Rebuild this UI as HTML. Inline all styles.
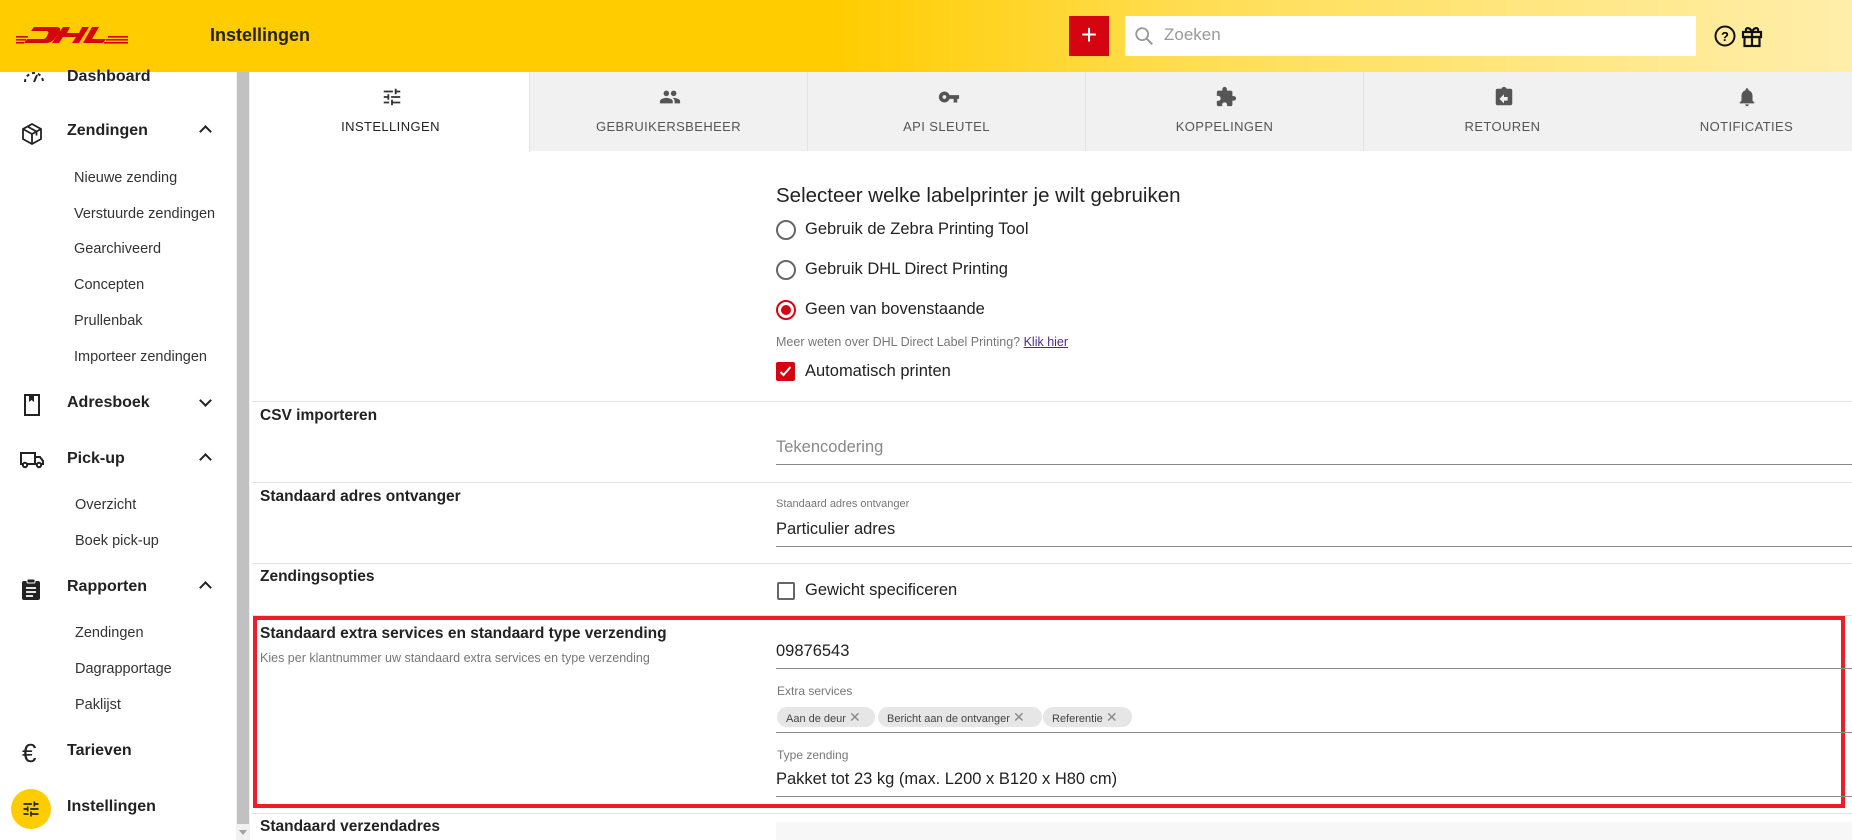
<!DOCTYPE html>
<html><head><meta charset="utf-8"><style>
*{box-sizing:border-box;margin:0;padding:0}
body{width:1852px;height:840px;overflow:hidden;font-family:"Liberation Sans",Arial,sans-serif;color:#222;background:#fff;position:relative}
.abs{position:absolute}
#hdr{left:0;top:0;width:1852px;height:72px;background:linear-gradient(90deg,#ffcc00 0%,#ffcc00 45%,#ffde55 65%,#ffeeaa 100%)}
.side{font-size:16px;font-weight:bold;color:#222}
.sub{font-size:14.5px;color:#333}
.tab{top:72px;height:79px;width:278px;background:#f1f1f1;border-right:1px solid #e3e3e3;text-align:center;font-size:13px;letter-spacing:.4px;color:#555}
.tab svg{position:absolute;left:129px;top:14px}
.tab span{position:absolute;left:0;right:0;top:47px}
.lbl{left:260px;font-size:15.5px;font-weight:bold;color:#222}
.hr{left:252px;width:1600px;height:1px;background:#e2e2e2}
.ul{left:776px;width:1076px;height:1px;background:#8a8a8a}
.t18{font-size:16.5px;color:#222}
.small{font-size:12.5px;color:#777}
.radio{width:20px;height:20px;border:2px solid #666;border-radius:50%}
.chip{top:707px;height:20px;border-radius:10px;background:#e6e6e6;font-size:11px;color:#444;line-height:20px;padding-left:9px}
</style></head><body>
<div id="hdr" class="abs"></div>
<!-- DHL logo -->
<svg class="abs" style="left:16px;top:26px" width="112" height="18" viewBox="0 0 112 18">
<g fill="#d40511">
<path d="M18 1h22c5 0 5 3 3 6l-3 4c-2 3-5 6-10 6H8l3-4h16c2 0 3-1 4-3l1-2c1-2 0-3-2-3H15z"/>
<path d="M47 1h7l-3 6h12l3-6h7l-10 16h-7l4-6H47l-4 6h-7z"/>
<path d="M76 1h7l-7 12h14l-3 4H67z"/>
<rect x="0" y="10" width="12" height="1.6"/><rect x="0" y="13" width="10" height="1.6"/><rect x="0" y="16" width="8" height="1.6"/>
<rect x="92" y="10" width="20" height="1.6"/><rect x="90" y="13" width="22" height="1.6"/><rect x="88" y="16" width="24" height="1.6"/>
</g></svg>
<div class="abs" style="left:210px;top:25px;font-size:18px;font-weight:bold;color:#222">Instellingen</div>
<div class="abs" style="left:1069px;top:16px;width:40px;height:40px;background:#d40511;color:#fff;font-size:28px;line-height:38px;text-align:center">+</div>
<div class="abs" style="left:1125px;top:16px;width:571px;height:40px;background:#fff"></div>
<svg class="abs" style="left:1133px;top:25px" width="22" height="22" viewBox="0 0 24 24"><circle cx="10" cy="10" r="6.5" fill="none" stroke="#999" stroke-width="2"/><path d="M15 15l6 6" stroke="#999" stroke-width="2.2"/></svg>
<div class="abs" style="left:1164px;top:25px;font-size:17px;color:#999">Zoeken</div>
<svg class="abs" style="left:1713px;top:24px" width="24" height="24" viewBox="0 0 24 24"><circle cx="12" cy="12" r="9.5" fill="none" stroke="#111" stroke-width="2"/><text x="12" y="17" font-size="13" font-weight="bold" text-anchor="middle" font-family="Liberation Sans">?</text></svg>
<svg class="abs" style="left:1741px;top:24px" width="22" height="24" viewBox="0 0 22 24"><g fill="none" stroke="#111" stroke-width="2.2"><rect x="2" y="8" width="18" height="5"/><rect x="3.5" y="13" width="15" height="9"/><path d="M11 8v14M11 8c-2-5-7-5-6-1M11 8c2-5 7-5 6-1"/></g></svg>

<!-- sidebar -->
<div class="abs" style="left:236px;top:72px;width:14px;height:768px;background:#f1f1f1"></div>
<div class="abs" style="left:237px;top:72px;width:12px;height:752px;background:#c1c1c1"></div>
<div class="abs" style="left:239px;top:830px;width:0;height:0;border-left:4px solid transparent;border-right:4px solid transparent;border-top:5px solid #a3a3a3"></div>
<svg class="abs" style="left:22px;top:72px" width="24" height="12" viewBox="0 0 24 12"><path d="M3 10a9 9 0 0 1 18 0" fill="none" stroke="#222" stroke-width="2" stroke-dasharray="3 3"/><path d="M12 10l3-7" stroke="#222" stroke-width="2"/></svg>
<div class="abs side" style="left:67px;top:68px">Dashboard</div>
<svg class="abs" style="left:20px;top:122px" width="24" height="24" viewBox="0 0 24 24"><g fill="none" stroke="#222" stroke-width="1.8"><path d="M12 2l9 5v10l-9 5-9-5V7z"/><path d="M3 7l9 5 9-5M12 12v10M7.5 4.5l9 5v4"/></g></svg>
<div class="abs side" style="left:67px;top:122px">Zendingen</div>
<div class="abs" style="left:201px;top:127px;width:9px;height:9px;border-left:2.5px solid #222;border-top:2.5px solid #222;transform:rotate(45deg)"></div>
<div class="abs sub" style="left:74px;top:170px">Nieuwe zending</div>
<div class="abs sub" style="left:74px;top:206px">Verstuurde zendingen</div>
<div class="abs sub" style="left:74px;top:241px">Gearchiveerd</div>
<div class="abs sub" style="left:74px;top:277px">Concepten</div>
<div class="abs sub" style="left:74px;top:313px">Prullenbak</div>
<div class="abs sub" style="left:74px;top:349px">Importeer zendingen</div>
<svg class="abs" style="left:22px;top:393px" width="20" height="24" viewBox="0 0 20 24"><rect x="3" y="2" width="14" height="20" fill="none" stroke="#222" stroke-width="2"/><path d="M7 2v7l2.5-2 2.5 2V2" fill="#222"/></svg>
<div class="abs side" style="left:67px;top:394px">Adresboek</div>
<div class="abs" style="left:201px;top:396px;width:9px;height:9px;border-right:2.5px solid #222;border-bottom:2.5px solid #222;transform:rotate(45deg)"></div>
<svg class="abs" style="left:19px;top:450px" width="26" height="20" viewBox="0 0 26 20"><g fill="none" stroke="#222" stroke-width="2"><path d="M2 3h14v11H2zM16 7h5l3 4v3h-8"/><circle cx="6" cy="15" r="2.2" fill="#fff"/><circle cx="20" cy="15" r="2.2" fill="#fff"/></g></svg>
<div class="abs side" style="left:67px;top:450px">Pick-up</div>
<div class="abs" style="left:201px;top:455px;width:9px;height:9px;border-left:2.5px solid #222;border-top:2.5px solid #222;transform:rotate(45deg)"></div>
<div class="abs sub" style="left:75px;top:497px">Overzicht</div>
<div class="abs sub" style="left:75px;top:533px">Boek pick-up</div>
<svg class="abs" style="left:21px;top:578px" width="20" height="22" viewBox="0 0 20 22"><rect x="1" y="3" width="18" height="19" rx="2" fill="#222"/><rect x="6" y="1" width="8" height="4" rx="1" fill="#222" stroke="#fff" stroke-width="1"/><path d="M5 10h10M5 14h10M5 18h7" stroke="#fff" stroke-width="1.8"/></svg>
<div class="abs side" style="left:67px;top:578px">Rapporten</div>
<div class="abs" style="left:201px;top:583px;width:9px;height:9px;border-left:2.5px solid #222;border-top:2.5px solid #222;transform:rotate(45deg)"></div>
<div class="abs sub" style="left:75px;top:625px">Zendingen</div>
<div class="abs sub" style="left:75px;top:661px">Dagrapportage</div>
<div class="abs sub" style="left:75px;top:697px">Paklijst</div>
<div class="abs" style="left:22px;top:738px;font-size:26px;color:#222">€</div>
<div class="abs side" style="left:67px;top:742px">Tarieven</div>
<div class="abs" style="left:11px;top:789px;width:40px;height:40px;border-radius:50%;background:#ffcc00"></div>
<svg class="abs" style="left:21px;top:799px" width="20" height="20" viewBox="0 0 24 24"><path fill="#222" d="M3 17v2h6v-2H3zM3 5v2h10V5H3zm10 16v-2h8v-2h-8v-2h-2v6h2zM7 9v2H3v2h4v2h2V9H7zm14 4v-2H11v2h10zm-6-4h2V7h4V5h-4V3h-2v6z"/></svg>
<div class="abs side" style="left:67px;top:798px">Instellingen</div>

<!-- tabs -->
<div class="abs" style="left:252px;top:72px;width:1600px;height:79px;background:#f1f1f1;border-bottom:1px solid #e3e3e3"></div>
<div class="abs tab" style="left:252px;background:#fff;color:#222;height:80px"><svg width="22" height="22" viewBox="0 0 24 24"><path fill="#333" d="M3 17v2h6v-2H3zM3 5v2h10V5H3zm10 16v-2h8v-2h-8v-2h-2v6h2zM7 9v2H3v2h4v2h2V9H7zm14 4v-2H11v2h10zm-6-4h2V7h4V5h-4V3h-2v6z"/></svg><span>INSTELLINGEN</span></div>
<div class="abs tab" style="left:530px"><svg width="22" height="22" viewBox="0 0 24 24"><path fill="#555" d="M16 11c1.7 0 3-1.3 3-3s-1.3-3-3-3-3 1.3-3 3 1.3 3 3 3zm-8 0c1.7 0 3-1.3 3-3S9.7 5 8 5 5 6.3 5 8s1.3 3 3 3zm0 2c-2.3 0-7 1.2-7 3.5V19h14v-2.5C15 14.2 10.3 13 8 13zm8 0c-.3 0-.6 0-1 .1 1.2.8 2 2 2 3.4V19h6v-2.5c0-2.3-4.7-3.5-7-3.5z"/></svg><span>GEBRUIKERSBEHEER</span></div>
<div class="abs tab" style="left:808px"><svg width="24" height="22" viewBox="0 0 24 24"><path fill="#555" d="M12.6 10A6 6 0 1 0 12.6 14H17v4h4v-4h2v-4H12.6zM7 14a2 2 0 1 1 0-4 2 2 0 0 1 0 4z"/></svg><span>API SLEUTEL</span></div>
<div class="abs tab" style="left:1086px"><svg width="22" height="22" viewBox="0 0 24 24"><path fill="#555" d="M20.5 11H19V7a2 2 0 0 0-2-2h-4V3.5a2.5 2.5 0 0 0-5 0V5H4a2 2 0 0 0-2 2v3.8h1.5a2.7 2.7 0 0 1 0 5.4H2V20a2 2 0 0 0 2 2h3.8v-1.5a2.7 2.7 0 0 1 5.4 0V22H17a2 2 0 0 0 2-2v-4h1.5a2.5 2.5 0 0 0 0-5z"/></svg><span>KOPPELINGEN</span></div>
<div class="abs tab" style="left:1364px"><svg width="22" height="22" viewBox="0 0 24 24"><path fill="#555" d="M19 3h-4.2C14.4 1.8 13.3 1 12 1s-2.4.8-2.8 2H5a2 2 0 0 0-2 2v14a2 2 0 0 0 2 2h14a2 2 0 0 0 2-2V5a2 2 0 0 0-2-2zm-3 13h-4v3l-5-5 5-5v3h4v4z"/></svg><span>RETOUREN</span></div>
<div class="abs tab" style="left:1641px;width:211px;border-right:none"><svg style="left:95px" width="22" height="22" viewBox="0 0 24 24"><path fill="#555" d="M12 22c1.1 0 2-.9 2-2h-4c0 1.1.9 2 2 2zm6-6v-5c0-3.1-1.6-5.6-4.5-6.3V4a1.5 1.5 0 0 0-3 0v.7C7.6 5.4 6 7.9 6 11v5l-2 2v1h16v-1l-2-2z"/></svg><span>NOTIFICATIES</span></div>

<!-- content -->
<div class="abs" style="left:776px;top:184px;font-size:20.5px;color:#222">Selecteer welke labelprinter je wilt gebruiken</div>
<div class="abs radio" style="left:776px;top:220px"></div>
<div class="abs t18" style="left:805px;top:220px">Gebruik de Zebra Printing Tool</div>
<div class="abs radio" style="left:776px;top:260px"></div>
<div class="abs t18" style="left:805px;top:260px">Gebruik DHL Direct Printing</div>
<div class="abs radio" style="left:776px;top:300px;border-color:#d40511"></div>
<div class="abs" style="left:781px;top:305px;width:10px;height:10px;border-radius:50%;background:#d40511"></div>
<div class="abs t18" style="left:805px;top:300px">Geen van bovenstaande</div>
<div class="abs small" style="left:776px;top:335px">Meer weten over DHL Direct Label Printing? <span style="color:#4b2a8a;text-decoration:underline">Klik hier</span></div>
<div class="abs" style="left:776px;top:362px;width:19px;height:19px;background:#d40511;border-radius:2px"></div>
<svg class="abs" style="left:778px;top:364px" width="15" height="15" viewBox="0 0 15 15"><path d="M2.5 8l3 3 7-8" fill="none" stroke="#fff" stroke-width="2"/></svg>
<div class="abs t18" style="left:805px;top:362px">Automatisch printen</div>
<div class="abs hr" style="top:401px"></div>
<div class="abs lbl" style="top:407px">CSV importeren</div>
<div class="abs" style="left:776px;top:438px;font-size:16.5px;color:#888">Tekencodering</div>
<div class="abs ul" style="top:464px"></div>
<div class="abs hr" style="top:482px"></div>
<div class="abs lbl" style="top:488px">Standaard adres ontvanger</div>
<div class="abs small" style="left:776px;top:498px;font-size:11px">Standaard adres ontvanger</div>
<div class="abs t18" style="left:776px;top:520px">Particulier adres</div>
<div class="abs ul" style="top:546px"></div>
<div class="abs hr" style="top:563px"></div>
<div class="abs lbl" style="top:568px">Zendingsopties</div>
<div class="abs" style="left:777px;top:582px;width:18px;height:18px;border:2px solid #666;border-radius:2px"></div>
<div class="abs t18" style="left:805px;top:581px">Gewicht specificeren</div>
<div class="abs hr" style="top:615px"></div>
<!-- red box -->
<div class="abs" style="left:253px;top:616px;width:1592px;height:192px;border:4px solid #ee1c25"></div>
<div class="abs lbl" style="top:625px">Standaard extra services en standaard type verzending</div>
<div class="abs small" style="left:260px;top:651px">Kies per klantnummer uw standaard extra services en type verzending</div>
<div class="abs t18" style="left:776px;top:642px">09876543</div>
<div class="abs ul" style="top:668px"></div>
<div class="abs small" style="left:777px;top:684px;font-size:12px">Extra services</div>
<div class="abs chip" style="left:777px;width:98px">Aan de deur <span style="color:#888;font-size:14px">✕</span></div>
<div class="abs chip" style="left:878px;width:164px">Bericht aan de ontvanger <span style="color:#888;font-size:14px">✕</span></div>
<div class="abs chip" style="left:1043px;width:89px">Referentie <span style="color:#888;font-size:14px">✕</span></div>
<div class="abs ul" style="top:732px"></div>
<div class="abs small" style="left:777px;top:748px;font-size:12px">Type zending</div>
<div class="abs t18" style="left:776px;top:770px">Pakket tot 23 kg (max. L200 x B120 x H80 cm)</div>
<div class="abs ul" style="top:796px"></div>
<div class="abs hr" style="top:813px"></div>
<div class="abs lbl" style="top:818px">Standaard verzendadres</div>
<div class="abs" style="left:776px;top:822px;width:1076px;height:18px;background:#f7f7f7"></div>
</body></html>
